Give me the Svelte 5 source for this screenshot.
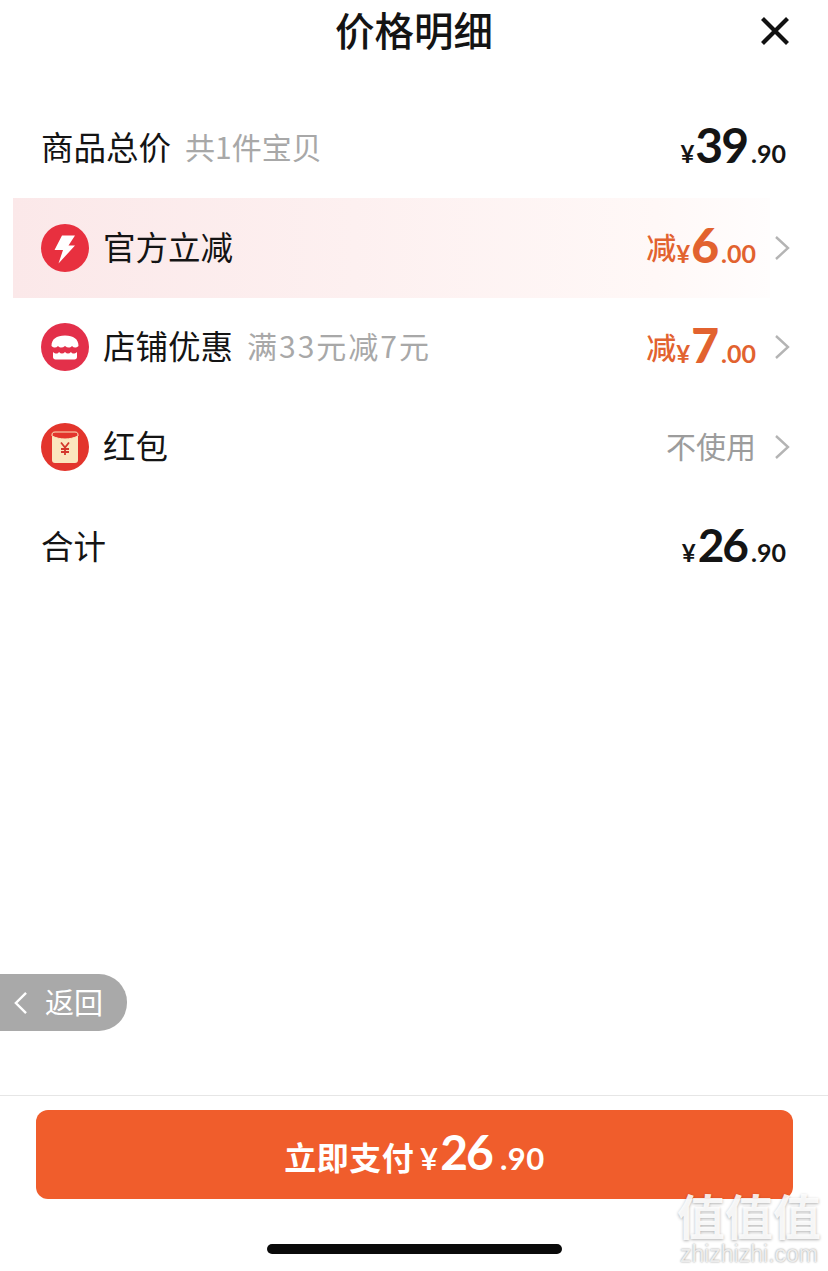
<script>
  const rows = [
    { id: "flash", label: "官方立减", amount: "6", active: true },
    { id: "shop", label: "店铺优惠", note: "满33元减7元", amount: "7" },
    { id: "packet", label: "红包", text: "不使用" },
  ];
</script>

<div class="page">
  <header>
    <h1>价格明细</h1>
    <button class="close" aria-label="关闭">
      <svg viewBox="0 0 30 30" width="30" height="30">
        <path d="M2.5 2.5 27.5 27.5M27.5 2.5 2.5 27.5" fill="none" stroke="#111" stroke-width="4.2" />
      </svg>
    </button>
  </header>

  <section class="list">
    <div class="row">
      <span class="label">商品总价</span>
      <span class="note">共1件宝贝</span>
      <span class="price total">
        <small class="yen">¥</small><b>39</b><small class="cents">.90</small>
      </span>
    </div>

    {#each rows as row}
      <div class="row link" class:active={row.active}>
        <svg class="badge" viewBox="0 0 48 48" width="48" height="48">
          {#if row.id === "flash"}
            <circle cx="24" cy="24" r="24" fill="#e8303f" />
            <path d="M21 11.500h13l-6.500 10h6.500L17.500 39.500l4.500-13.500h-8.500z" fill="#fff" />
          {:else if row.id === "shop"}
            <circle cx="24" cy="24" r="24" fill="#e3304a" />
            <path d="M10.500 23c0-7 5-10.500 13.500-10.500S37.500 16 37.500 23c-2.500 2-4.500 2-6.500 0-2 2-4.500 2-7 0-2.500 2-5 2-7 0-2 2-4 2-6.500 0z" fill="#fff" />
            <path d="M12 29c2.500 2 4.500 2 6 0 2 2 4 2 6 0 2 2 4 2 6 0 1.500 2 3.500 2 6 0v5c0 1.500-1 2.500-2.500 2.500h-19C13 36.500 12 35.500 12 34z" fill="#fff" />
          {:else}
            <circle cx="24" cy="24" r="24" fill="#e3352c" />
            <rect x="11" y="9" width="26" height="31" rx="3" fill="#fbe6bd" />
            <path d="M11 12c0-2 1-3 3-3h20c2 0 3 1 3 3v1c-8 4-18 4-26 0z" fill="#e3352c" stroke="#fbe6bd" stroke-width="1" />
            <path d="M20 19.500l4 5 4-5M24 24.500V32M20 26h8M20 29h8" fill="none" stroke="#d3382c" stroke-width="1.800" />
          {/if}
        </svg>
        <span class="label">{row.label}</span>
        {#if row.note}<span class="note wide">{row.note}</span>{/if}
        {#if row.amount}
          <span class="price off">
            <span class="minus">减</span><small class="yen">¥</small><b>{row.amount}</b><small class="cents">.00</small>
          </span>
        {:else}
          <span class="unused">{row.text}</span>
        {/if}
        <svg class="chevron" viewBox="0 0 16 26" width="16" height="26">
          <path d="M2 2l12 11L2 24" fill="none" stroke="#b4b4b4" stroke-width="2.400" />
        </svg>
      </div>
    {/each}

    <div class="row">
      <span class="label">合计</span>
      <span class="price sum">
        <small class="yen">¥</small><b>26</b><small class="cents">.90</small>
      </span>
    </div>
  </section>

  <button class="back">
    <svg viewBox="0 0 16 26" width="15" height="24">
      <path d="M14 2 3 13l11 11" fill="none" stroke="#fff" stroke-width="2.600" />
    </svg>
    <span>返回</span>
  </button>

  <footer>
    <button class="pay">
      <span>立即支付<small class="yen">¥</small><b>26</b><small class="cents">.90</small></span>
    </button>
    <div class="home"></div>
  </footer>

  <div class="watermark" aria-hidden="true">
    <span class="mark">值值值</span>
    <span class="site">zhizhizhi.com</span>
  </div>
</div>

<style>
  :global(body) {
    margin: 0;
    background: #fff;
  }

  .page {
    position: relative;
    width: 828px;
    height: 1271px;
    overflow: hidden;
    display: flex;
    flex-direction: column;
    background: #fff;
    color: #141414;
    font-family: "Noto Sans CJK SC", "Liberation Sans", sans-serif;
  }

  header {
    height: 98px;
    flex: none;
    box-sizing: border-box;
    padding: 3px 36px 0 0;
    display: flex;
    align-items: flex-start;
    justify-content: center;
    position: relative;
  }

  h1 {
    margin: 0;
    padding-left: 36px;
    font-size: 39.500px;
    line-height: 52px;
    font-weight: 500;
  }

  .close {
    position: absolute;
    top: 16px;
    right: 38px;
    width: 30px;
    height: 30px;
    padding: 0;
    border: 0;
    background: none;
    display: flex;
  }

  .list {
    flex: 1;
    display: flex;
    flex-direction: column;
  }

  .row {
    height: 99.800px;
    box-sizing: border-box;
    margin: 0 38px 0 13px;
    padding-left: 28px;
    display: flex;
    align-items: center;
    flex: none;
  }

  .row.active {
    margin-right: 58px;
    background: linear-gradient(90deg, #fbe8e9 0%, #fdf0f0 45%, #fff8f7 85%, #fffdfd 100%);
  }

  .badge {
    flex: none;
    margin-right: 14px;
  }

  .label {
    font-size: 32.500px;
    line-height: 44px;
    margin-bottom: 4px;
  }

  .note {
    margin-left: 14px;
    margin-bottom: 4px;
    font-size: 30px;
    line-height: 44px;
    color: #a8a8a8;
  }

  .note.wide {
    letter-spacing: 2px;
  }

  .price {
    margin-left: auto;
    margin-bottom: 6px;
    white-space: nowrap;
    font-family: Lato, "Noto Sans CJK SC", sans-serif;
    font-weight: 700;
  }

  .price b,
  .pay b {
    font-weight: 700;
    letter-spacing: -2px;
  }

  .yen {
    font-size: 24px;
    font-weight: 700;
  }

  .cents {
    font-size: 25px;
    font-weight: 700;
    margin-left: 4px;
  }

  .total,
  .sum {
    margin-right: 4px;
  }

  .total b {
    font-size: 48px;
    margin-left: 1px;
  }

  .sum b {
    font-size: 46px;
    margin-left: 2px;
  }

  .off {
    color: #e2622f;
  }

  .off b {
    font-size: 48px;
    font-weight: 900;
    margin-left: 1px;
  }

  .off .minus {
    font-family: "Noto Sans CJK SC", sans-serif;
    font-size: 30px;
    font-weight: 500;
    vertical-align: 4px;
  }

  .unused {
    margin-left: auto;
    margin-bottom: 4px;
    font-size: 30px;
    line-height: 44px;
    color: #9c9c9c;
  }

  .chevron {
    flex: none;
    margin-left: 18px;
  }

  .row.active .chevron {
    margin-right: -20px;
  }

  .back {
    position: absolute;
    left: 0;
    top: 974px;
    width: 127px;
    height: 57px;
    padding: 0 0 0 13px;
    border: 0;
    border-radius: 0 28px 28px 0;
    background: #a9a9a9;
    color: #fff;
    display: flex;
    align-items: center;
    gap: 17px;
    font-family: "Noto Sans CJK SC", sans-serif;
    font-size: 29px;
  }

  .back span {
    margin-bottom: 4px;
  }

  footer {
    flex: none;
    height: 176px;
    box-sizing: border-box;
    border-top: 1px solid #e6e6e6;
    padding: 14px 35px 0 36px;
    display: flex;
    flex-direction: column;
    align-items: center;
  }

  .pay {
    width: 100%;
    height: 89px;
    flex: none;
    padding: 0 0 6px;
    border: 0;
    border-radius: 12px;
    background: #f05d2c;
    color: #fff;
    font-family: "Noto Sans CJK SC", sans-serif;
    font-size: 32px;
    font-weight: 700;
    letter-spacing: 0.5px;
    white-space: nowrap;
  }

  .pay b {
    font-family: Lato, sans-serif;
    font-size: 48px;
    margin-left: 2px;
  }

  .pay .yen {
    font-size: 30px;
    font-family: Lato, sans-serif;
    margin-left: 6px;
  }

  .pay .cents {
    font-family: Lato, sans-serif;
    font-size: 31px;
    margin-left: 8px;
  }

  .home {
    width: 295px;
    height: 10px;
    margin-top: 45px;
    flex: none;
    border-radius: 5px;
    background: #0a0a0a;
  }

  .watermark {
    position: absolute;
    left: 674px;
    top: 1188px;
    width: 150px;
    display: flex;
    flex-direction: column;
    align-items: center;
    color: rgba(255, 255, 255, 0.88);
    pointer-events: none;
  }

  .mark {
    font-size: 48px;
    line-height: 52px;
    font-weight: 700;
    white-space: nowrap;
    text-shadow: 0 1px 3px rgba(0, 0, 0, 0.3);
  }

  .site {
    margin-top: 2px;
    font-family: "Liberation Sans", sans-serif;
    font-size: 23px;
    line-height: 24px;
    white-space: nowrap;
    color: rgba(245, 245, 245, 0.9);
    text-shadow: 0 0 2px rgba(0, 0, 0, 0.45);
  }
</style>
